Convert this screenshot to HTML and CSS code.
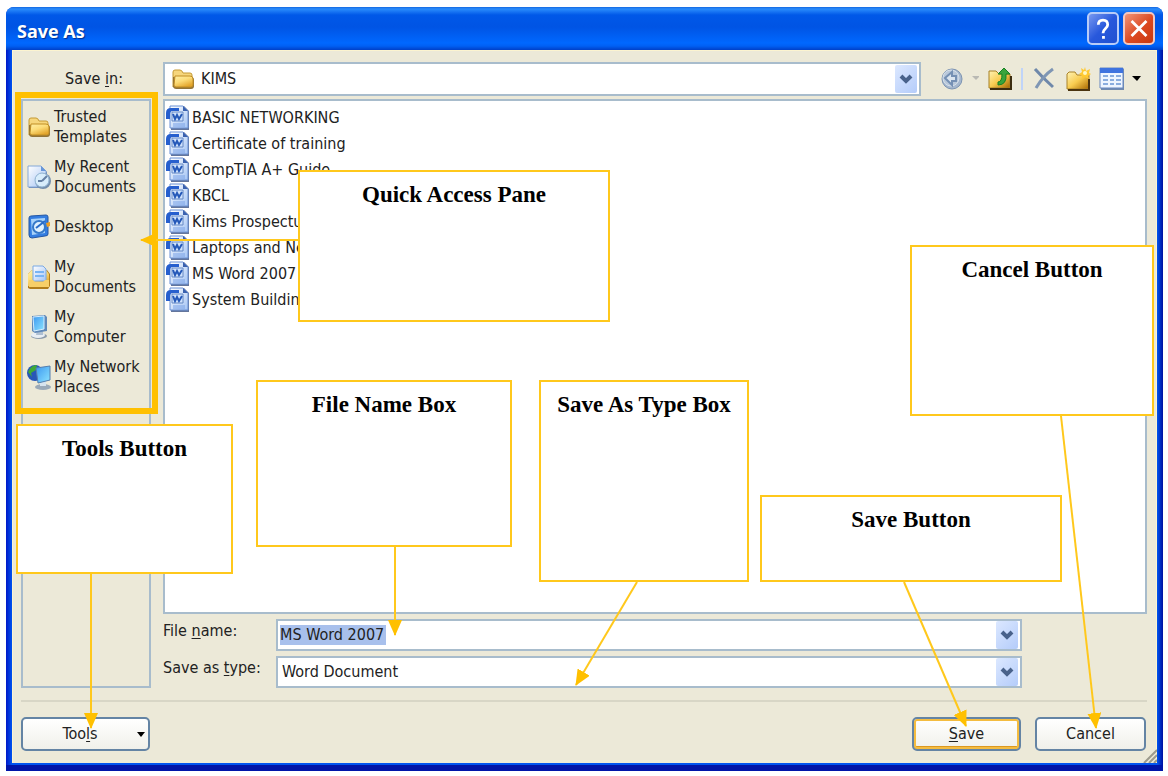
FILE: index.html
```html
<!DOCTYPE html>
<html lang="en">
<head>
<meta charset="utf-8">
<meta name="viewport" content="width=device-width, initial-scale=1">
<title>Save As</title>
<link rel="stylesheet" href="styles.css">
</head>
<body>
<svg class="defs" aria-hidden="true">
  <defs>
    <linearGradient id="gold" x1="0" y1="0" x2="0.6" y2="1"><stop offset="0" stop-color="#fff0a8"/><stop offset="0.5" stop-color="#fcdc78"/><stop offset="1" stop-color="#e3a52c"/></linearGradient>
    <linearGradient id="amber" x1="0" y1="0" x2="1" y2="1"><stop offset="0" stop-color="#fff3b4"/><stop offset="0.5" stop-color="#f8cc50"/><stop offset="1" stop-color="#a86800"/></linearGradient>
    <linearGradient id="sheet" x1="0" y1="0" x2="1" y2="1"><stop offset="0" stop-color="#ffffff"/><stop offset="1" stop-color="#a4c4f4"/></linearGradient>
    <linearGradient id="screen" x1="0" y1="0" x2="1" y2="1"><stop offset="0" stop-color="#3c98f0"/><stop offset="1" stop-color="#8ce4ff"/></linearGradient>
    <symbol id="folder" viewBox="0 0 24 22">
      <path d="M2 19V4q0-2 2-2h5q2 0 3 3h7q2 0 2 2v4" fill="#f6d67c" stroke="#c59a34"/>
      <path d="M5 9h15q3 0 3 3v6q0 3-3 3H5q-2 0-3-2V9z" fill="#927438"/>
      <path d="M4 8h15q3 0 3 3v6q0 2-2 2H5q-2 0-2-2z" fill="url(#gold)" stroke="#c18e25"/>
    </symbol>
    <symbol id="word" viewBox="0 0 25 26">
      <path d="M6 1h13l5 5v19H6z" fill="#64769c"/>
      <path d="M5 1h13l5 5v17H5z" fill="url(#sheet)" stroke="#6b91d5"/>
      <path d="M18 1v5h5z" fill="#3a61ae"/>
      <path d="M8 19h12M8 21h12" stroke="#7aa2e6"/>
      <path d="M1 14V8q0-5 5-5h8v3H8q-3 0-3 3v5z" fill="#265fce"/>
      <path d="M7 7h11v9H7z" fill="#d0e2fc" stroke="#6588c4"/>
      <path d="M8 9l2 5 2-4 2 4 3-5" fill="none" stroke="#2458b8" stroke-width="2"/>
    </symbol>
    <symbol id="chevron" viewBox="0 0 22 28"><path d="M6 11l5 5 5-5" fill="none" stroke="#49628b" stroke-width="4"/></symbol>
    <symbol id="monitor" viewBox="0 0 24 26">
      <ellipse cx="12" cy="22" rx="8" ry="3" fill="#8b9aaa"/><ellipse cx="11" cy="21" rx="7" ry="3" fill="#e8eef4"/>
      <path d="M10 16h6v5h-7z" fill="#aebfd2"/><path d="M5 2l13-1 2 2v14l-12 2-3-2z" fill="#6089b9"/><path d="M6 3l11-1v13L7 17z" fill="url(#screen)" stroke="#d3edff"/>
    </symbol>
  </defs>
</svg>

<main class="dialog">
  <header class="titlebar">
    <h1>Save As</h1>
    <button class="caption" type="button" aria-label="Help"><svg viewBox="0 0 30 30"><path d="M10 11q0-5 5-5t5 5c0 4-5 4-5 9" fill="none" stroke="#fff" stroke-width="3"/><path d="M14 23h3v3h-3z" fill="#fff"/></svg></button>
    <button class="caption close" type="button" aria-label="Close"><svg viewBox="0 0 30 30"><path d="M7 7l16 16M23 7L7 23" stroke="#fff" stroke-width="3"/></svg></button>
  </header>

  <form class="content">
    <div class="location">
      <label for="folder-select">Save <u>i</u>n:</label>
      <div class="combo">
        <svg class="combo-icon" aria-hidden="true"><use href="#folder"/></svg>
        <select id="folder-select"><option>KIMS</option></select>
        <svg class="drop" aria-hidden="true"><use href="#chevron"/></svg>
      </div>
      <div class="toolbar">
        <button type="button" class="tool back" aria-label="Back"><svg viewBox="0 0 38 26"><circle cx="12" cy="13" r="10" fill="#a5b7ce" stroke="#7d94b2"/><circle cx="11" cy="12" r="8" fill="#b9c8da" stroke="#d6e0ea"/><path d="M5 12l7-6v4h4v5h-4v4z" fill="#dbe5ef" stroke="#7590b4" stroke-width="2"/><path d="M32 10h8l-4 4z" fill="#b9b9b3"/></svg></button>
        <button type="button" class="tool" aria-label="Up one level"><svg viewBox="0 0 26 26"><path d="M2 22V5h7l3 3h11v14z" fill="url(#amber)" stroke="#a78026"/><path d="M3 23h21V10" fill="none" stroke="#3c2d10" stroke-width="2"/><path d="M11 19v-3q4 0 4-8h-4l6-6 6 6h-4q1 11-8 11z" fill="#39a43c" stroke="#168222"/></svg></button>
        <span class="divider"></span>
        <button type="button" class="tool delete" aria-label="Delete"><svg viewBox="0 0 26 26"><path d="M4 3q8 9 18 18" fill="none" stroke="#6f88aa" stroke-width="3"/><path d="M22 3Q12 10 5 22" fill="none" stroke="#7f96b4" stroke-width="3"/></svg></button>
        <button type="button" class="tool new" aria-label="Create new folder"><svg viewBox="0 0 26 26"><path d="M2 23V8l2-2h6l2 3h12v14z" fill="url(#amber)" stroke="#aa8229"/><path d="M3 24h21V13" fill="none" stroke="#4a3410" stroke-width="2"/><path d="M20 1l1 4 4-2-1 4 2 1-3 2 1 3-4-2-3 2v-3l-3-2 3-2-1-4 3 2z" fill="#ffc932"/><circle cx="20" cy="7" r="2" fill="#fff9c2"/></svg></button>
        <button type="button" class="tool views" aria-label="Views"><svg viewBox="0 0 44 26"><path d="M2 3h23v21H2z" fill="#718aae"/><path d="M1 2h23v20H1z" fill="#eef5ff" stroke="#6787c1"/><path d="M1 2h23v5H1z" fill="#3e73df"/><path d="M4 10h5M11 10h4M17 10h5M4 14h5M11 14h4M17 14h5M4 18h5M11 18h4M17 18h5" stroke="#8aaddf" stroke-width="2"/><path d="M33 10h9l-4 5z" fill="#000"/></svg></button>
      </div>
    </div>

    <div class="browser">
      <nav class="places" aria-label="Places">
        <a href="#"><svg><use href="#folder"/></svg><span>Trusted Templates</span></a>
        <a href="#"><svg viewBox="0 0 24 26"><path d="M2 3h13l5 5v16H2z" fill="#6783ac"/><path d="M1 2h13l5 5v16H1z" fill="url(#sheet)" stroke="#85a8d7"/><path d="M14 2v5h5" fill="#6897d9"/><circle cx="16" cy="17" r="8" fill="#748eac"/><circle cx="15" cy="16" r="7" fill="#d8edfb" stroke="#91b4d2"/><path d="M15 17l5-5M15 17h-4" stroke="#6681a4" stroke-width="2"/></svg><span>My Recent Documents</span></a>
        <a href="#"><svg viewBox="0 0 24 26"><path d="M2 4q0-2 2-2l15-1q2 0 2 2v17q0 2-3 2L5 24q-3 0-3-3z" fill="#347de0" stroke="#2457a4"/><path d="M4 5l14-1v15L5 21z" fill="#a7d2fa"/><circle cx="12" cy="13" r="6" fill="#dff1ff" stroke="#3578c8" stroke-width="2"/><path d="M9 14l9-7" stroke="#286bc7" stroke-width="2"/><path d="M19 9l4-1v4l-3 1z" fill="#ed9f24"/></svg><span>Desktop</span></a>
        <a href="#"><svg viewBox="0 0 24 26"><path d="M1 24V10l4-4h15l3 4v12l-2 3H3z" fill="#b17d1b"/><path d="M1 22V10l4-4h14l3 4v12z" fill="url(#gold)"/><path d="M6 2h10l3 3v12H6z" fill="url(#sheet)" stroke="#79a8e4"/><path d="M8 12h9M8 8h9" stroke="#79b4f4" stroke-width="2"/><path d="M2 16h4l2 2h8l2-2h4v7H2z" fill="#f7cf68"/></svg><span>My<br>Documents</span></a>
        <a href="#"><svg><use href="#monitor"/></svg><span>My<br>Computer</span></a>
        <a href="#"><svg viewBox="0 0 24 26"><circle cx="8" cy="9" r="8" fill="#2857b8"/><path d="M1 8q3-7 9-7l-1 5-5 3 1 4z" fill="#3fa935"/><ellipse cx="16" cy="23" rx="8" ry="3" fill="#9aa9b8"/><path d="M13 17h6v5h-6z" fill="#d6e3ee"/><path d="M9 4l14-2v14l-12 3z" fill="url(#screen)" stroke="#557fae"/></svg><span>My Network Places</span></a>
      </nav>
      <ul class="files">
        <li><svg><use href="#word"/></svg>BASIC NETWORKING</li>
        <li><svg><use href="#word"/></svg>Certificate of training</li>
        <li><svg><use href="#word"/></svg>CompTIA A+ Guide</li>
        <li><svg><use href="#word"/></svg>KBCL</li>
        <li><svg><use href="#word"/></svg>Kims Prospectus</li>
        <li><svg><use href="#word"/></svg>Laptops and Networking</li>
        <li><svg><use href="#word"/></svg>MS Word 2007</li>
        <li><svg><use href="#word"/></svg>System Building</li>
      </ul>
      <div class="fields">
        <label for="file-name">File <u>n</u>ame:</label>
        <div class="combo">
          <input id="file-name" class="selected" type="text" value="MS Word 2007">
          <button class="drop" type="button" aria-label="Show recent names"><svg><use href="#chevron"/></svg></button>
        </div>
        <label for="file-type">Save as <u>t</u>ype:</label>
        <div class="combo">
          <select id="file-type"><option>Word Document</option></select>
          <svg class="drop" aria-hidden="true"><use href="#chevron"/></svg>
        </div>
      </div>
    </div>

    <footer class="actions">
      <button type="button" class="btn tools"><span>Too<u>l</u>s</span><svg viewBox="0 0 8 5" aria-hidden="true"><path d="M0 0h8L4 5z"/></svg></button>
      <button type="submit" class="btn primary"><span><u>S</u>ave</span></button>
      <button type="button" class="btn">Cancel</button>
    </footer>
  </form>
  <svg class="grip" viewBox="0 0 14 14" aria-hidden="true"><path d="M1 14L14 1M6 14l8-8M11 14l3-3" stroke="#9c9a8c" stroke-width="2"/></svg>
</main>

<div class="annotations">
  <div class="highlight"></div>
  <section class="callout quick"><h2>Quick Access Pane</h2></section>
  <section class="callout cancel"><h2>Cancel Button</h2></section>
  <section class="callout name"><h2>File Name Box</h2></section>
  <section class="callout type"><h2>Save As Type Box</h2></section>
  <section class="callout toolbox"><h2>Tools Button</h2></section>
  <section class="callout save"><h2>Save Button</h2></section>
  <svg class="arrows" viewBox="0 0 1168 776" aria-hidden="true">
    <defs><marker id="head" markerUnits="userSpaceOnUse" markerWidth="16" markerHeight="14" refX="15" refY="7" orient="auto"><path d="M0 0l16 7-16 7z" fill="#ffc000"/></marker></defs>
    <g stroke="#ffc81c" stroke-width="2">
      <path d="M298 240H141" marker-end="url(#head)"/>
      <path d="M395 547V635" marker-end="url(#head)"/>
      <path d="M637 582L576 685" marker-end="url(#head)"/>
      <path d="M91 574V728" marker-end="url(#head)"/>
      <path d="M904 582L966 726" marker-end="url(#head)"/>
      <path d="M1061 416L1096 728" marker-end="url(#head)"/>
    </g>
  </svg>
</div>
</body>
</html>
```
FILE: styles.css
```css
* { box-sizing: border-box; }

body {
  position: relative;
  display: flex;
  min-height: 100vh;
  margin: 0;
  padding: 7px 5px 5px 6px;
  background: #fff;
  color: #222;
  font: 16px/20px "DejaVu Sans Condensed", "Noto Sans", sans-serif;
}

button, input, select { font: inherit; color: inherit; }
button { padding: 0; border: 0; background: none; }
svg { display: block; flex: none; }
u { text-underline-offset: 2px; }
.defs { position: absolute; width: 0; height: 0; }

.dialog {
  position: relative;
  display: flex;
  flex: 1;
  flex-direction: column;
  padding: 0 6px 8px;
  border-radius: 8px 8px 0 0;
  background: linear-gradient(90deg, #0018c8, #0054f0 6px, #0054f0 calc(100% - 6px), #0010a0);
  box-shadow: inset 0 -8px 0 -2px #0014a8;
}

.titlebar {
  display: flex;
  align-items: center;
  gap: 4px;
  height: 43px;
  margin: 0 -6px;
  padding: 0 8px 0 11px;
  border-radius: 8px 8px 0 0;
  background: linear-gradient(#1468e0, #2a8cfc 2px, #0058e8 8px, #0054e4 20px, #0068ff 36px, #0060f4 39px, #0040c8);
}

.titlebar h1 {
  flex: 1;
  margin: 0;
  padding-top: 4px;
  color: #fff;
  font: bold 18px/24px "Open Sans", "Noto Sans", sans-serif;
  text-shadow: 1px 1px 1px #003090;
}

.caption {
  width: 32px;
  height: 33px;
  border: 2px solid #b8ccf8;
  border-radius: 5px;
  background: linear-gradient(135deg, #7898f0, #2858dc 50%, #2050d0);
}
.caption svg { width: 100%; height: 100%; }
.close { border-color: #f4c8c0; background: linear-gradient(135deg, #f09478, #dc4820 55%, #c83810); }

.content {
  display: flex;
  flex: 1;
  flex-direction: column;
  padding: 11px 9px 12px 8px;
  border: solid #fcf4d0;
  border-width: 1px 1px 0;
  background: #ece9d8;
}

.location { display: flex; align-items: center; }
.location label { width: 142px; padding-right: 40px; text-align: right; white-space: nowrap; }
.location .combo { flex: 1; height: 34px; }

.combo {
  display: flex;
  align-items: center;
  min-width: 0;
  height: 32px;
  padding: 0 2px;
  border: 2px solid #a8bccc;
  background: #fff;
}
.combo-icon { width: 24px; height: 22px; margin: 0 4px; }
.combo input, .combo select {
  flex: 1;
  min-width: 0;
  height: 20px;
  padding: 0 2px;
  border: 0;
  outline: 0;
  background: transparent;
  appearance: none;
}
.combo .selected { padding: 0; background: linear-gradient(#a8c0ec, #a8c0ec) no-repeat 0 0 / 106px 100%; }
.drop { width: 22px; height: 28px; border-radius: 2px; background: linear-gradient(135deg, #dce8ff, #b4ccfa); }
.drop svg { width: 22px; height: 28px; }

.toolbar { display: flex; align-items: center; width: 226px; padding-left: 18px; }
.tool svg { width: 26px; height: 26px; }
.back { margin-right: 8px; }
.back svg { width: 40px; }
.divider { width: 2px; height: 22px; margin: 0 8px; background: #c0d4f8; }
.delete, .new { margin-right: 8px; }
.views svg { width: 44px; }

.browser {
  display: grid;
  flex: 1;
  grid-template: 1fr auto / 130px 1fr;
  gap: 5px 12px;
  margin-top: 3px;
}

.places {
  grid-row: 1 / 3;
  padding-top: 1px;
  border: 2px solid #a8bccc;
}
.places a {
  display: flex;
  align-items: center;
  gap: 3px;
  height: 50px;
  padding-left: 4px;
  color: inherit;
  line-height: 20px;
  text-decoration: none;
}
.places svg { width: 24px; height: 26px; }

.files { margin: 0; padding: 4px 0 0; border: 2px solid #a8bccc; background: #fff; list-style: none; }
.files li { display: flex; align-items: center; gap: 2px; height: 26px; }
.files svg { width: 25px; height: 26px; }

.fields {
  display: grid;
  grid-template-columns: 101px 1fr;
  gap: 5px 12px;
  padding-right: 125px;
}
.fields label { line-height: 24px; white-space: nowrap; }

.actions { display: flex; gap: 14px; margin-top: 12px; padding: 15px 1px 0 0; border-top: 2px solid #d8d6c6; }
.btn {
  width: 111px;
  height: 34px;
  border: 2px solid #6484a4;
  border-radius: 5px;
  background: linear-gradient(#fff, #f0f0ea);
}
.tools { display: flex; align-items: center; width: 129px; margin-right: auto; padding-right: 3px; }
.tools span { flex: 1; }
.tools svg { width: 8px; height: 5px; }
.primary { width: 109px; box-shadow: inset 0 0 0 2px #f4bc40, inset 0 -3px 0 #dc9820; }

.grip { position: absolute; right: 6px; bottom: 8px; width: 14px; height: 14px; }

.annotations { position: absolute; top: 0; left: 0; pointer-events: none; }
.arrows { position: absolute; top: 0; left: 0; width: 1168px; height: 776px; fill: none; }
.highlight { position: absolute; top: 92px; left: 15px; width: 143px; height: 322px; border: 6px solid #ffc000; }
.callout { position: absolute; padding-top: 9px; border: 2px solid #ffc81c; background: #fff; text-align: center; }
.callout h2 { margin: 0; color: #000; font: bold 23px/28px "Liberation Serif", serif; white-space: nowrap; }
.quick { top: 170px; left: 298px; width: 312px; height: 152px; }
.cancel { top: 245px; left: 910px; width: 244px; height: 171px; }
.name { top: 380px; left: 256px; width: 256px; height: 167px; }
.type { top: 380px; left: 539px; width: 210px; height: 202px; }
.toolbox { top: 424px; left: 16px; width: 217px; height: 150px; }
.save { top: 495px; left: 760px; width: 302px; height: 87px; }
```
